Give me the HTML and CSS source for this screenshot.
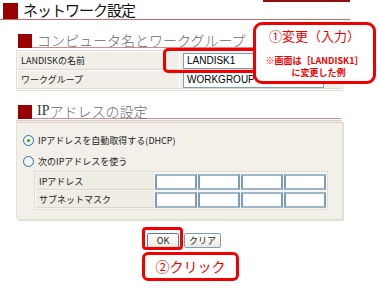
FILE: index.html
```html
<!DOCTYPE html>
<html lang="ja">
<head>
    <meta charset="UTF-8">
    <title>ネットワーク設定</title>
    <link rel="stylesheet" href="styles.css">
</head>
<body>
    <div class="page">
        <div class="topbar"></div>
        <h1 class="title">ネットワーク設定</h1>

        <h2 class="sec"><span class="sq"></span>コンピュータ名とワークグループ</h2>
        <table class="form1">
            <tr>
                <td class="lbl">LANDISKの名前</td>
                <td class="val"><input type="text" class="txt" value="LANDISK1"></td>
            </tr>
            <tr>
                <td class="lbl">ワークグループ</td>
                <td class="val"><input type="text" class="txt" value="WORKGROUP"></td>
            </tr>
        </table>

        <h2 class="sec"><span class="sq"></span><b class="ip">IP</b>アドレスの設定</h2>
        <div class="ip-panel">
            <div class="opt"><span class="radio on"></span>IPアドレスを自動取得する(DHCP)</div>
            <div class="opt"><span class="radio"></span>次のIPアドレスを使う</div>
            <table class="form2">
                <tr>
                    <td class="lbl">IPアドレス</td>
                    <td><span class="box"></span></td>
                    <td><span class="box"></span></td>
                    <td><span class="box"></span></td>
                    <td><span class="box"></span></td>
                </tr>
                <tr>
                    <td class="lbl">サブネットマスク</td>
                    <td><span class="box"></span></td>
                    <td><span class="box"></span></td>
                    <td><span class="box"></span></td>
                    <td><span class="box"></span></td>
                </tr>
            </table>
        </div>

        <div class="buttons">
            <button class="btn ok">OK</button>
            <button class="btn">クリア</button>
        </div>

        <!-- 注記 -->
        <div class="mark mark-input"></div>
        <div class="note note-input">
            <div class="note-big">①変更（入力）</div>
            <div class="note-small">※画面は［LANDISK1］</div>
            <div class="note-small indent">に変更した例</div>
        </div>
        <div class="mark mark-ok"></div>
        <div class="note note-click">②クリック</div>
    </div>
</body>
</html>
```

FILE: styles.css
```css
body {
    margin: 0;
    font-family: "Noto Sans CJK JP", sans-serif;
    background: #fff;
    color: #333;
}

.page {
    position: relative;
    width: 380px;
    height: 290px;
    overflow: hidden;
}

.topbar {
    position: absolute;
    left: 263px;
    top: 0;
    width: 87px;
    height: 2px;
    background: #8c1010;
}

.title {
    margin: 0;
    width: 350px;
    height: 19px;
    border-bottom: 1px solid #c86868;
    display: flex;
    align-items: flex-end;
    gap: 5px;
    font-size: 15px;
    font-weight: normal;
    line-height: 18px;
    letter-spacing: -1px;
    color: #111;
}

.title::before {
    content: "";
    width: 15px;
    height: 16px;
    margin-left: 3px;
    background: #990000;
}

.sec {
    margin: 13px 0 0 18px;
    width: 323px;
    height: 14px;
    display: flex;
    align-items: center;
    font-size: 14px;
    font-weight: 300;
    line-height: 14px;
    color: #6a6a6a;
    border-bottom: 1px solid #d88a8a;
}

.sec .sq {
    width: 14px;
    height: 14px;
    margin-right: 5px;
    background: #990000;
    align-self: flex-end;
    margin-bottom: -1px;
}

.sec .ip {
    font-family: "Liberation Serif", serif;
    color: #333;
}

.form1 {
    margin: 2px 0 0 16px;
    width: 327px;
    border-collapse: separate;
    border-spacing: 1px;
    background: #fff;
    border: 1px solid #e2ddd2;
}

.form1 td {
    height: 17px;
    padding: 0;
    background: #f2efe8;
    border-bottom: 1px solid #ddd8cc;
}

.lbl {
    font-size: 9px;
    color: #222;
    padding-left: 3px !important;
}

.form1 .lbl {
    width: 158px;
}

.val {
    padding-left: 3px !important;
}

.txt {
    display: block;
    box-sizing: border-box;
    width: 141px;
    height: 16px;
    margin: 0;
    padding: 0 3px;
    border: 1px solid #7f9db9;
    font-family: "Liberation Sans", sans-serif;
    font-size: 10px;
    color: #000;
    background: #fff;
}

.ip-panel {
    margin: 1px 0 0 16px;
    width: 326px;
    height: 99px;
    padding-top: 11px;
    box-sizing: border-box;
    background: #f3f0e9;
    border-top: 3px double #d8d2c4;
    border-left: 1px solid #e6e1d6;
    box-shadow: 2px 2px 0 #e4dfd3;
}

.opt {
    display: flex;
    align-items: center;
    height: 12px;
    margin: 0 0 9px 6px;
    font-size: 9px;
    color: #222;
}

.radio {
    width: 9px;
    height: 9px;
    margin-right: 4px;
    border: 1px solid #2f6ea8;
    border-radius: 50%;
    background: #f4f4f0;
    display: flex;
    align-items: center;
    justify-content: center;
}

.radio.on::after {
    content: "";
    width: 3px;
    height: 3px;
    border-radius: 50%;
    background: #21a121;
}

.form2 {
    margin: -5px 0 0 17px;
    border-collapse: separate;
    border-spacing: 1px;
    background: #f8f6f1;
    border: 1px solid #e2ddd2;
}

.form2 td {
    height: 16px;
    padding: 0;
}

.form2 .lbl {
    width: 115px;
    background: #efece4;
    border-bottom: 1px solid #ddd8cc;
}

.box {
    display: block;
    width: 38px;
    height: 12px;
    background: #fff;
    border: 2px solid #9fb5cb;
    border-left-color: #7f9db9;
    border-right-color: #7f9db9;
}

.buttons {
    display: flex;
    gap: 5px;
    margin: 14px 0 0 147px;
}

.btn {
    height: 15px;
    padding: 0 4px;
    font-family: "Noto Sans CJK JP", sans-serif;
    font-size: 9px;
    line-height: 12px;
    color: #222;
    border: 1px solid #7f9db9;
    border-radius: 2px;
    background: linear-gradient(#ffffff, #ece9e2);
}

.btn.ok {
    width: 32px;
    border-color: #5e7a99;
}

.mark {
    position: absolute;
    border: 3px solid #f20000;
    border-radius: 5px;
}

.mark-input {
    left: 163px;
    top: 48px;
    width: 100px;
    height: 19px;
}

.mark-ok {
    left: 142px;
    top: 227px;
    width: 35px;
    height: 17px;
    border-radius: 4px;
}

.note {
    position: absolute;
    box-sizing: border-box;
    border: 3px solid #f20000;
    border-radius: 9px;
    background: #fff;
    color: #f20000;
    text-align: center;
}

.note-input {
    left: 253px;
    top: 22px;
    width: 123px;
    height: 62px;
}

.note-big {
    margin-top: 2px;
    font-size: 13px;
    line-height: 18px;
}

.note-small {
    font-size: 9px;
    font-weight: bold;
    line-height: 12px;
    white-space: nowrap;
}

.note-big + .note-small {
    margin-top: 10px;
}

.note-small.indent {
    padding-left: 8px;
}

.note-click {
    left: 142px;
    top: 252px;
    width: 97px;
    height: 29px;
    border-radius: 6px;
    font-size: 14px;
    line-height: 22px;
}
```
